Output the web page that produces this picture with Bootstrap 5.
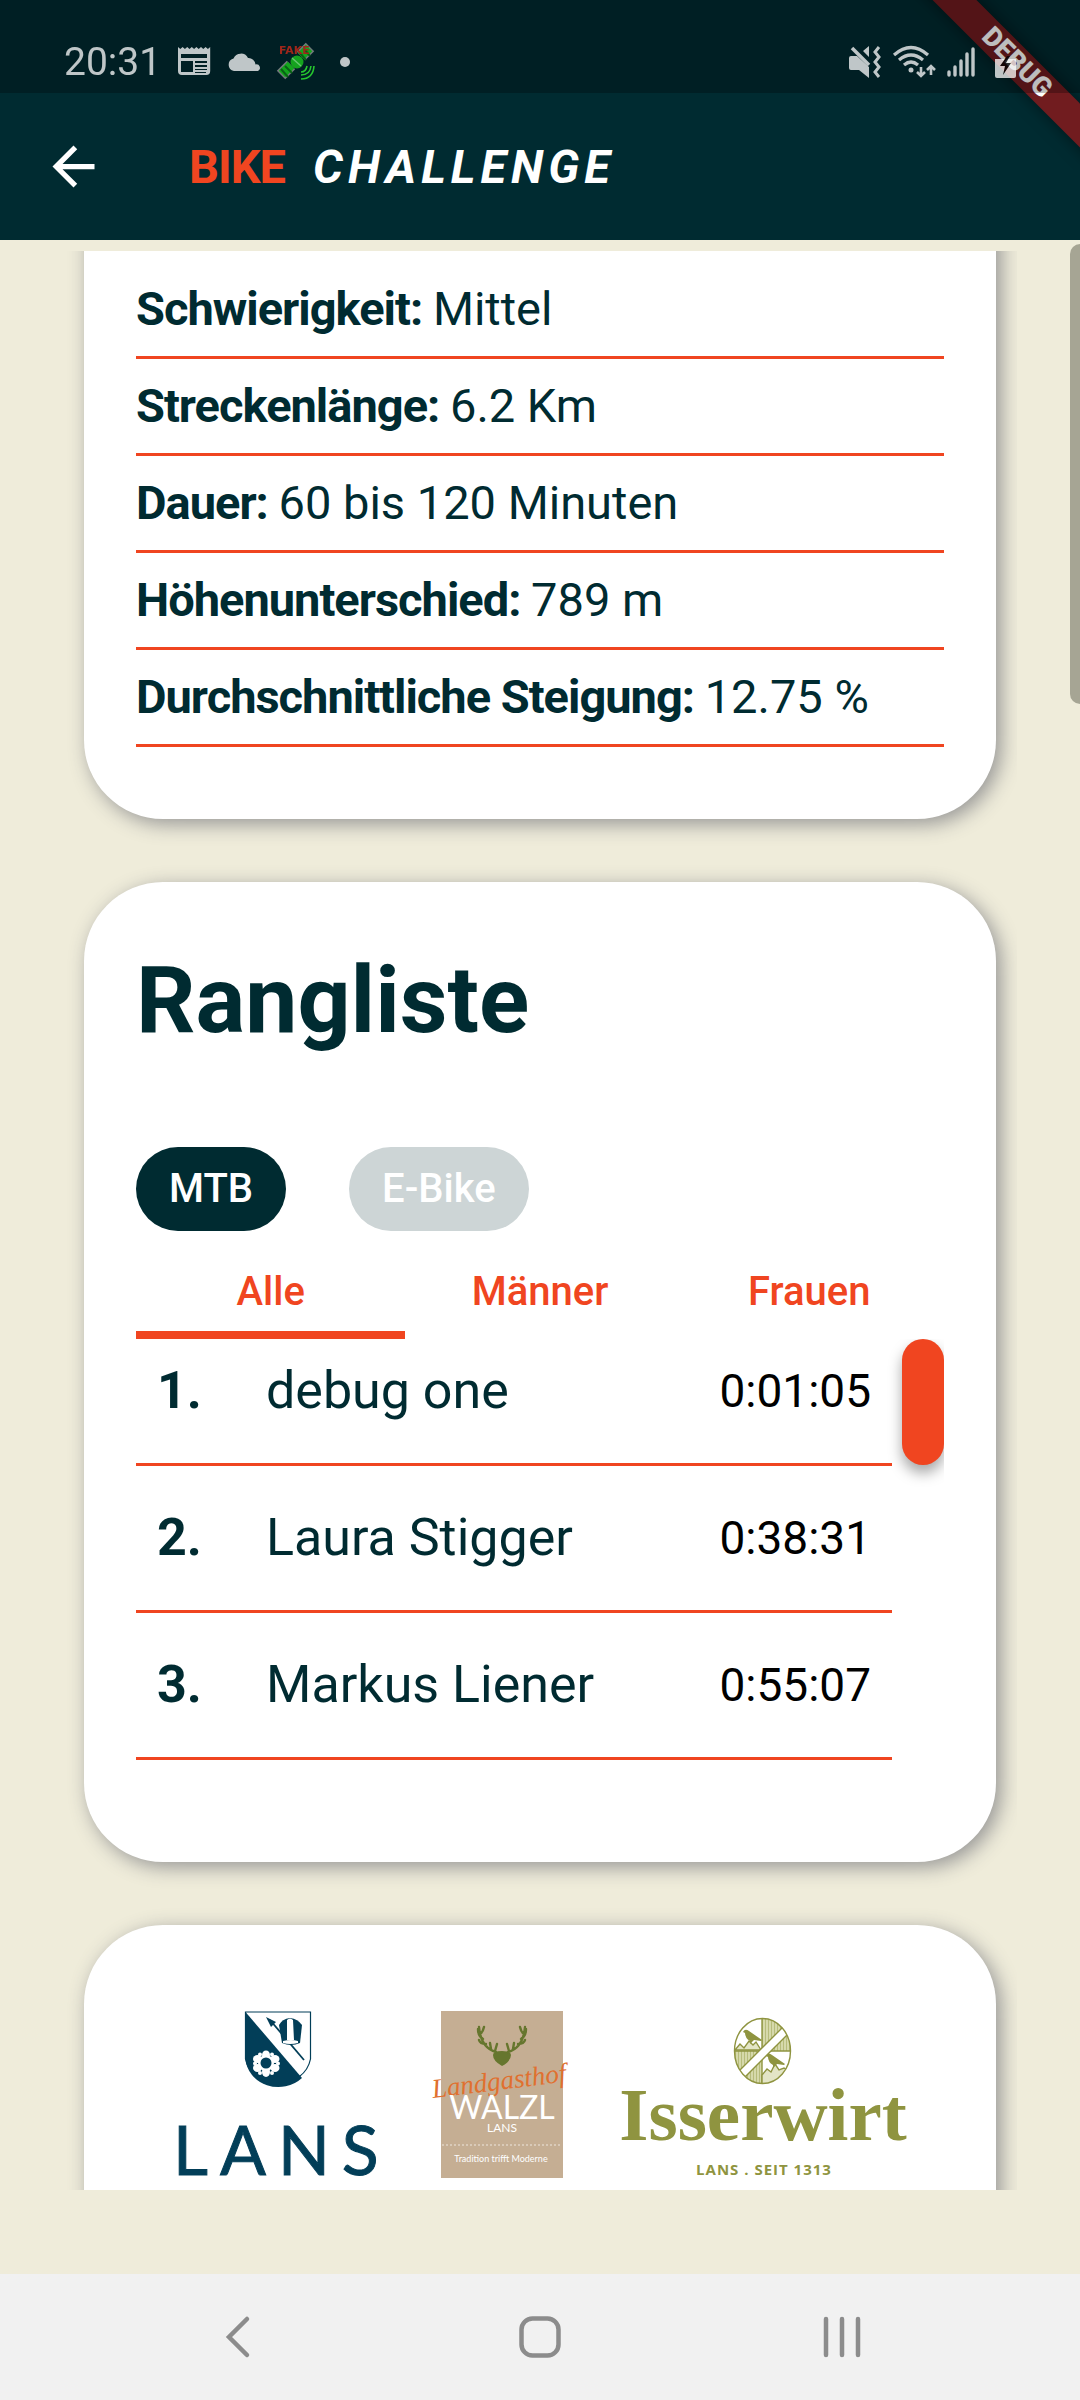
<!DOCTYPE html>
<html lang="de">
<head>
<meta charset="utf-8">
<meta name="viewport" content="width=device-width, initial-scale=1">
<title>Bike Challenge</title>
<link href="https://cdn.jsdelivr.net/npm/bootstrap@5.3.0/dist/css/bootstrap.min.css" rel="stylesheet">
<style>
  :root { --ink: #002b31; --accent: #f04520; --sand: #efecda; }
  body { font-family: Roboto, "Noto Sans", sans-serif; background: var(--sand); color: var(--ink); }
  svg { display: block; overflow: visible; }

  .status-bar { height: 93px; padding: 39px 64px 0 64px; background: var(--ink); }
  .status-scrim { background: rgba(0,0,0,.26); z-index: 2; height: 93px; }
  .status-items { z-index: 3; color: #fff; opacity: .75; }
  .clock { font-size: 39px; line-height: 46px; }
  .status-left { gap: 17px; }
  .status-right { gap: 12px; }

  .debug-clip { z-index: 1; width: 170px; height: 170px; pointer-events: none; }
  .debug-ribbon { width: 260px; height: 31px; top: 47px; right: -67px; transform: rotate(45deg); background: #711c1f; color: #fff; font-size: 27px; line-height: 31px; font-weight: 900; box-shadow: 0 0 16px rgba(0,0,0,.5); }

  .app-bar { height: 147px; padding: 0 42px; background: var(--ink); gap: 84px; }
  .app-title { font-size: 47px; line-height: 56px; gap: 28px; }
  .title-bike { color: var(--accent); letter-spacing: -1px; }
  .title-challenge { letter-spacing: 5px; }

  .viewport { margin: 11px 63px 84px; padding: 0 21px; min-height: 0; }
  .panel { background: #fff; border-radius: 79px; box-shadow: 5px 5px 20px #959595; padding: 65px 52px 102px; margin-bottom: 63px; flex: none; }
  .panel-facts { margin-top: -100px; padding: 111px 52px 72px; }
  .panel-sponsors { padding: 84px 0 120px; }
  .fact { font-size: 47px; line-height: 56px; padding: 19px 0; border-bottom: 3px solid var(--accent); }
  .fact b { letter-spacing: -1px; }

  .rank-title { font-size: 93px; line-height: 108px; margin: 0 0 92px; }
  .pills { gap: 63px; }
  .pill { height: 84px; padding: 0 33px; border: 0; border-radius: 42px; font-size: 40px; line-height: 48px; font-weight: 500; color: #fff; background: #cdd5d6; }
  .pill.active { background: var(--ink); }
  .sex-tab { padding: 37px 0 15px; border: 0; border-bottom: 8px solid transparent; background: none; color: var(--accent); font-size: 40px; line-height: 48px; font-weight: 500; }
  .sex-tab.active { border-color: var(--accent); }

  .rank-area { gap: 10px; }
  .rank-table { border-collapse: separate; border-spacing: 0; }
  .rank-table td { padding: 42px 0; border-bottom: 3px solid var(--accent); font-size: 52px; line-height: 60px; vertical-align: middle; }
  .rank-table tr:first-child td { padding-top: 22px; }
  .rank-table .rank-no { width: 130px; padding-left: 21px; font-weight: 700; }
  .rank-table .rank-time { padding-right: 21px; font-size: 46px; line-height: 56px; color: #000; text-align: right; }
  .rank-thumb { width: 42px; height: 126px; border-radius: 21px; background: var(--accent); box-shadow: 0 8px 14px rgba(0,0,0,.35); flex: none; }

  .sponsors { gap: 48px; }
  .page-thumb { width: 10px; height: 460px; top: 244px; right: 0; background: #a6a594; border-radius: 10px 0 0 10px; }

  .nav-keys { height: 126px; background: #f1f1f1; flex: none; }
  .nav-key { border: 0; background: none; padding: 0; width: 302px; }
  .nav-key svg { margin: 0 auto; }
</style>
</head>
<body class="vh-100 d-flex flex-column overflow-hidden position-relative">

<header class="position-relative">
  <div class="status-scrim position-absolute top-0 start-0 w-100"></div>
  <div class="debug-clip position-absolute top-0 end-0 overflow-hidden">
    <div class="debug-ribbon position-absolute text-center">DEBUG</div>
  </div>
  <div class="status-bar">
    <div class="status-items position-relative d-flex justify-content-between">
      <div class="status-left d-flex align-items-center">
        <span class="clock">20:31</span>
        <svg width="32" height="30" viewBox="0 2 32 30" fill="currentColor" role="img" aria-label="News">
          <path fill-rule="evenodd" d="M0 2l2.300 2 2.300-2 2.300 2 2.300-2 2.300 2 2.300-2 2.300 2 2.300-2 2.300 2 2.300-2 2.300 2 2.300-2 2.300 2 2.300-2v24a4 4 0 0 1-4 4H4a4 4 0 0 1-4-4zM3 9v4h26V9zM3 16v11h12V16zM17 16v2h12v-2zM17 20v2h12v-2zM17 24v1h12v-1zM17 27v1h11v-1z"/>
        </svg>
        <svg width="34" height="20" viewBox="0 0 34 20" fill="currentColor" role="img" aria-label="Wetter"><path d="M7 19a7 6.500 0 0 1-.5-12.500A8 8 0 0 1 21 6a7 7 0 0 1 7.500 6.500A3.500 3.500 0 0 1 31 19z"/></svg>
        <svg width="36" height="36" viewBox="0 0 36 36" role="img" aria-label="Fake GPS">
          <path d="M3 31L13 21M23 12l9-9" stroke="#999" stroke-width="12"/>
          <path d="M4 30L13 21M23 12l8-8" stroke="#1ad41a" stroke-width="9"/>
          <path d="M3 25l7 8M7 22l7 7M22 9l6 7M26 5l6 7" stroke="#0b7a10" stroke-width="2"/>
          <circle cx="19" cy="18" r="6.500" fill="#1cd01c"/><path d="M14 14l9 8" stroke="#8f8" stroke-width="1.500"/>
          <path d="M23 28q5 0 6-6M23 31q9 0 10-9M23 35q12 0 13-13" fill="none" stroke="#3f3" stroke-width="1.600"/>
          <text x="1" y="10" font-size="11" font-weight="700" fill="#d62a18" font-family="DejaVu Sans">FAKE</text>
        </svg>
        <svg width="30" height="10" viewBox="0 0 30 10" fill="currentColor"><circle cx="14" cy="5" r="5"/></svg>
      </div>
      <div class="status-right d-flex align-items-center">
        <svg width="32" height="32" viewBox="0 0 32 32" fill="currentColor" role="img" aria-label="Vibration">
          <path d="M2 10h6l12 11v11L10 24H2a2 2 0 0 1-2-2V12a2 2 0 0 1 2-2zM20 0v11l-6-6z"/>
          <path d="M3 2l17 17" stroke="currentColor" stroke-width="3.500"/>
          <path d="M30 1l-4 5 4 5-4 5 4 5-4 5 4 5" fill="none" stroke="currentColor" stroke-width="3"/>
        </svg>
        <svg width="42" height="32" viewBox="0 0 42 32" fill="none" stroke="currentColor" stroke-width="3.200" role="img" aria-label="WLAN">
          <path d="M1 9q17-15 34 0M6 14q12-10 24 0M11 19q7-6 14 0"/><circle cx="18" cy="24" r="2.500" fill="currentColor" stroke="none"/>
          <path d="M28 21v8m-4-3l4 4 4-4M38 29v-9m-4 4l4-4 4 4" stroke-width="2.600"/>
        </svg>
        <svg width="28" height="30" viewBox="0 0 28 30" stroke="currentColor" stroke-width="3.400" stroke-linecap="round" role="img" aria-label="Signal"><path d="M2 25v3M8 20v8M14 14v14M20 7v21M26 2v26"/></svg>
        <svg class="ms-2" width="21" height="31" viewBox="0 0 21 31" fill="currentColor" role="img" aria-label="Akku">
          <path d="M0 12h21v17a2 2 0 0 1-2 2H2a2 2 0 0 1-2-2z"/><path d="M12 9L5 19h5l-2 9 8-12h-5l4-7z" fill="#000"/>
        </svg>
      </div>
    </div>
  </div>
  <nav class="app-bar d-flex align-items-center">
    <a href="#" aria-label="Zurück" class="text-white">
      <svg width="63" height="63" viewBox="0 0 24 24" fill="currentColor"><path d="M20 11H7.830l5.590-5.590L12 4l-8 8 8 8 1.410-1.410L7.830 13H20z"/></svg>
    </a>
    <h1 class="app-title m-0 d-flex fw-bold text-white"><span class="title-bike">BIKE</span><em class="title-challenge">CHALLENGE</em></h1>
  </nav>
</header>

<div class="page-thumb position-absolute"></div>

<main class="viewport flex-grow-1 overflow-hidden d-flex flex-column">
  <section class="panel panel-facts">
    <div class="fact"><b>Schwierigkeit: </b>Mittel</div>
    <div class="fact"><b>Streckenlänge: </b>6.2 Km</div>
    <div class="fact"><b>Dauer: </b>60 bis 120 Minuten</div>
    <div class="fact"><b>Höhenunterschied: </b>789 m</div>
    <div class="fact"><b>Durchschnittliche Steigung: </b>12.75 %</div>
  </section>

  <section class="panel">
    <h2 class="rank-title fw-bold">Rangliste</h2>
    <div class="pills d-flex">
      <button type="button" class="pill active">MTB</button>
      <button type="button" class="pill">E-Bike</button>
    </div>
    <div class="d-flex" role="tablist">
      <button type="button" role="tab" aria-selected="true" class="sex-tab active col-4">Alle</button>
      <button type="button" role="tab" aria-selected="false" class="sex-tab col-4">Männer</button>
      <button type="button" role="tab" aria-selected="false" class="sex-tab col-4">Frauen</button>
    </div>
    <div class="rank-area d-flex overflow-hidden">
      <table class="rank-table flex-grow-1">
        <tbody>
          <tr><td class="rank-no">1.</td><td>debug one</td><td class="rank-time">0:01:05</td></tr>
          <tr><td class="rank-no">2.</td><td>Laura Stigger</td><td class="rank-time">0:38:31</td></tr>
          <tr><td class="rank-no">3.</td><td>Markus Liener</td><td class="rank-time">0:55:07</td></tr>
        </tbody>
      </table>
      <div class="rank-thumb"></div>
    </div>
  </section>

  <section class="panel panel-sponsors">
    <div class="sponsors d-flex justify-content-center">
      <svg width="207" height="172" viewBox="175 2009 207 172" role="img" aria-label="Lans">
        <path d="M245.500 2012h65v47a33 30 0 0 1-65 0z" fill="#fff" stroke="#023e58" stroke-width="1.200"/>
        <path d="M245.500 2012L302 2078a33 30 0 0 1-56.500-19z" fill="#023e58"/>
        <path d="M270 2020l34 40" stroke="#023e58" stroke-width="1.800"/><path d="M266 2017l10 5-5 5z" fill="#023e58"/>
        <path d="M279 2025q3-6 11-7 8 1 12 7l-2 18q-9 4-18 0z" fill="#023e58"/>
        <path d="M287 2020q3-3 6 0l1 20h-7zM283 2041q8-2 15 0v2q-8 2-15 0z" fill="#fff"/>
        <g fill="#fff"><ellipse cx="266" cy="2055" rx="4" ry="4.500"/><ellipse cx="257.500" cy="2059" rx="4.500" ry="4"/><ellipse cx="275" cy="2059" rx="4.500" ry="4"/><ellipse cx="257.500" cy="2068" rx="4.500" ry="4"/><ellipse cx="275" cy="2068" rx="4.500" ry="4"/><ellipse cx="266" cy="2072" rx="4" ry="5"/><circle cx="266" cy="2063" r="8"/><circle cx="260" cy="2054.500" r="2"/><circle cx="272" cy="2054.500" r="2"/><circle cx="255" cy="2063.500" r="2"/><circle cx="278" cy="2063.500" r="2"/><circle cx="260" cy="2073" r="2"/><circle cx="272" cy="2073" r="2"/></g>
        <circle cx="266" cy="2063" r="5.500" fill="#023e58"/>
        <text x="173" y="2175" font-family="Lato" font-size="68" letter-spacing="12" fill="#023e58" stroke="#023e58" stroke-width="1">LANS</text>
      </svg>
      <svg width="140" height="172" viewBox="430 2009 140 172" role="img" aria-label="Landgasthof Walzl">
        <rect x="441" y="2011" width="122" height="167" fill="#c5ae93"/>
        <path d="M502 2066q-9-5-9-11 0-4 9-4 9 0 9 4 0 6-9 11z" fill="#66762e"/>
        <g fill="none" stroke="#66762e" stroke-width="2.400" stroke-linecap="round"><path d="M496 2052q-15-4-17-25M483 2039q-5-3-5-10M480 2034q3-2 4-7M486 2044q-6 0-7-4M491 2049l-1-6M495 2051l2-7M508 2052q15-4 17-25M521 2039q5-3 5-10M524 2034q-3-2-4-7M518 2044q6 0 7-4M513 2049l1-6M509 2051l-2-7"/></g>
        <text x="433" y="2098" transform="rotate(-7 433 2098)" font-family="Liberation Serif" font-style="italic" font-size="27" fill="#e0702f">Landgasthof</text>
        <text x="502" y="2119" text-anchor="middle" font-family="Lato" font-size="32" fill="#fff">WALZL</text>
        <text x="502" y="2132" text-anchor="middle" font-family="Lato" font-size="12" fill="#fff">LANS</text>
        <path d="M442 2145h120" stroke="#fff" stroke-width="1" stroke-dasharray="2 2" opacity=".7"/>
        <text x="501" y="2162" text-anchor="middle" font-family="Lato" font-size="9" fill="#fff">Tradition trifft Moderne</text>
      </svg>
      <svg width="287" height="172" viewBox="618 2009 287 172" role="img" aria-label="Isserwirt Lans">
        <defs><clipPath id="oval"><ellipse cx="762.500" cy="2051" rx="28" ry="32.500"/></clipPath>
        <pattern id="hatch" width="3" height="3" patternUnits="userSpaceOnUse"><rect width="3" height="3" fill="#d6d9ab"/><rect width="1" height="3" fill="#b7bc7c"/></pattern></defs>
        <g clip-path="url(#oval)">
          <rect x="762" y="2018" width="30" height="33" fill="url(#hatch)"/><rect x="734" y="2051" width="28" height="34" fill="url(#hatch)"/>
          <path d="M762 2018v66M734 2051h57" stroke="#8f9440" stroke-width="1.400"/>
          <path d="M735 2050l5-6 4 4 5-7 4 4 3-3 5 8zM762 2075l5-6 4 3 4-8 4 6 5-2 6 4v14h-28z" fill="#e3e5c6" stroke="#8f9440" stroke-width="1.400"/>
          <path d="M738 2072L784 2026l6 6-46 46z" fill="#fff" stroke="#8f9440" stroke-width="1.400"/>
          <path id="bird" d="M743 2032q2-4 6-1l13 9-1 1-7-1-4 4v-3q-5-3-5-8z" fill="#8f9440"/>
          <use href="#bird" x="23" y="24"/>
        </g>
        <ellipse cx="762.500" cy="2051" rx="28" ry="32.500" fill="none" stroke="#8f9440" stroke-width="1.400"/>
        <text x="763" y="2140" text-anchor="middle" font-family="Liberation Serif" font-weight="700" font-size="75" fill="#8f9440">Isserwirt</text>
        <text x="764" y="2175" text-anchor="middle" font-family="Open Sans" font-weight="700" font-size="15" letter-spacing="1" fill="#8f9440">LANS . SEIT 1313</text>
      </svg>
    </div>
  </section>
</main>

<nav class="nav-keys d-flex justify-content-center align-items-center">
  <button type="button" class="nav-key" aria-label="Zurück"><svg width="24" height="42" viewBox="0 0 24 42" fill="none" stroke="#8c8c8c" stroke-width="4.500" stroke-linecap="round"><path d="M21 3L3 21l18 18"/></svg></button>
  <button type="button" class="nav-key" aria-label="Start"><svg width="42" height="42" viewBox="0 0 42 42" fill="none" stroke="#8c8c8c" stroke-width="4.500"><rect x="2.500" y="2.500" width="37" height="37" rx="11"/></svg></button>
  <button type="button" class="nav-key" aria-label="Letzte Apps"><svg width="38" height="42" viewBox="0 0 38 42" fill="none" stroke="#8c8c8c" stroke-width="4.500" stroke-linecap="round"><path d="M3 3v36M19 3v36M35 3v36"/></svg></button>
</nav>

<script src="https://cdn.jsdelivr.net/npm/bootstrap@5.3.0/dist/js/bootstrap.bundle.min.js"></script>
</body>
</html>
